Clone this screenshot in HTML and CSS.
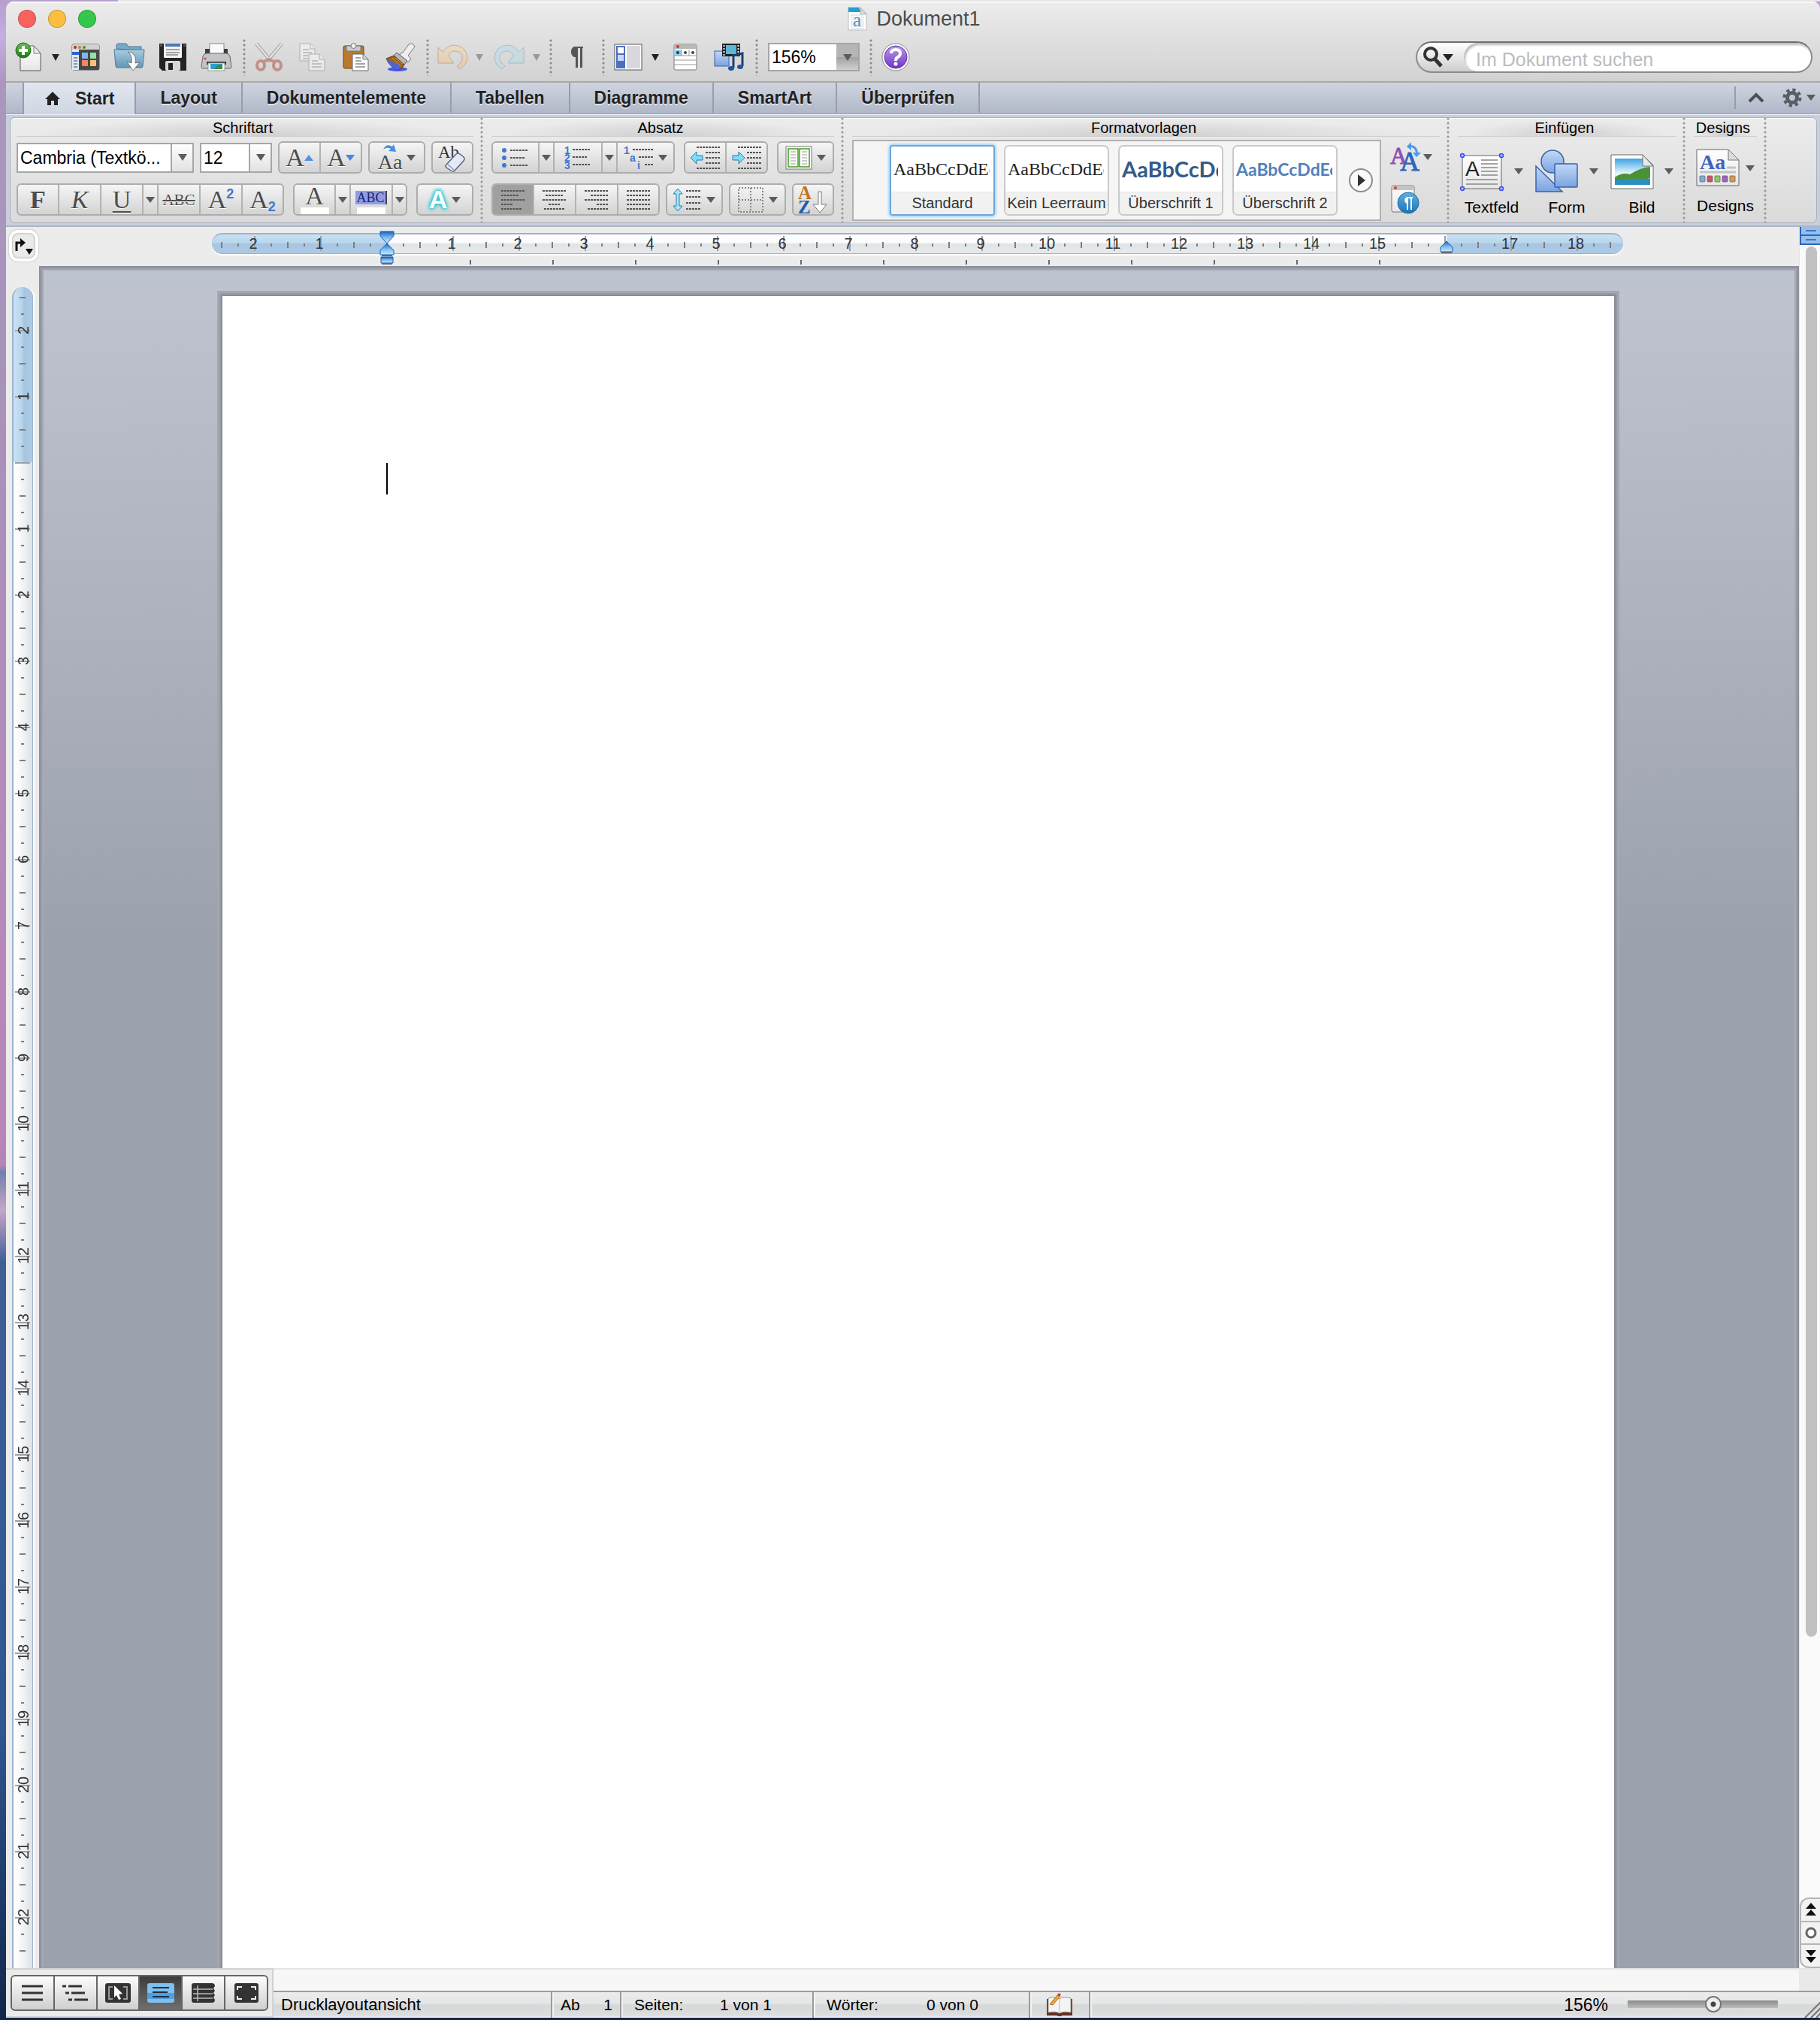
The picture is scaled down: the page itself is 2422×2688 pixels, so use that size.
FILE: index.html
```html
<!DOCTYPE html>
<html lang="de">
<head>
<meta charset="utf-8">
<title>Dokument1</title>
<link rel="stylesheet" href="styles.css">
</head>
<body>
<svg class="defs" width="0" height="0" aria-hidden="true">
  <defs>
    <linearGradient id="paper" x1="0" y1="0" x2="0" y2="1"><stop offset="0" stop-color="#fff"/><stop offset="1" stop-color="#e6e6e6"/></linearGradient>
    <linearGradient id="folder" x1="0" y1="0" x2="0" y2="1"><stop offset="0" stop-color="#a8cbe0"/><stop offset="1" stop-color="#6296b8"/></linearGradient>
    <linearGradient id="shape" x1="0" y1="0" x2="0" y2="1"><stop offset="0" stop-color="#c3d9f6"/><stop offset="1" stop-color="#7ba3e0"/></linearGradient>
    <linearGradient id="violet" x1="0" y1="0" x2="0" y2="1"><stop offset="0" stop-color="#b99be8"/><stop offset="1" stop-color="#7132cb"/></linearGradient>
    <linearGradient id="green" x1="0" y1="0" x2="0" y2="1"><stop offset="0" stop-color="#66c153"/><stop offset="1" stop-color="#1c7a14"/></linearGradient>
    <linearGradient id="sky" x1="0" y1="0" x2="0" y2="1"><stop offset="0" stop-color="#3fa4e4"/><stop offset=".55" stop-color="#e3f5fa"/><stop offset="1" stop-color="#9fdcf0"/></linearGradient>
    <linearGradient id="marker" x1="0" y1="0" x2="0" y2="1"><stop offset="0" stop-color="#1b62bb"/><stop offset=".5" stop-color="#7db9f5"/><stop offset="1" stop-color="#c4efff"/></linearGradient>
    <linearGradient id="blueball" x1="0" y1="0" x2="0" y2="1"><stop offset="0" stop-color="#5fb2e2"/><stop offset="1" stop-color="#1a73b5"/></linearGradient>
    <linearGradient id="orange" x1="0" y1="0" x2="0" y2="1"><stop offset="0" stop-color="#f9d9a6"/><stop offset="1" stop-color="#f0bd7b"/></linearGradient>
  </defs>
</svg>

<div class="window">
  <header class="chrome">
    <div class="titlebar">
      <div class="lights">
        <button class="light light-red" aria-label="Schließen"></button>
        <button class="light light-yellow" aria-label="Minimieren"></button>
        <button class="light light-green" aria-label="Vollbild"></button>
      </div>
      <h1 class="title">
        <svg width="24" height="30" viewBox="0 0 24 30"><path d="M0 0h16l8 9v21H0z" fill="#fff" stroke="#bbb"/><path d="M0 0h14l3 6H0z" fill="#22a0cf"/><path d="M16 0v9h8z" fill="#ddd" stroke="#999" stroke-width=".7"/><path d="M3 10h16M3 13h18M3 16h18M3 19h18M3 22h18M3 25h18M3 28h18" stroke="#c9d6de"/><text x="6" y="25" class="svg-serif" font-size="25" fill="#4b95c9">a</text></svg>
        Dokument1
      </h1>
    </div>

    <div class="toolbar">
      <button class="tool" aria-label="Neu"><svg width="36" height="40" viewBox="0 0 36 40"><path d="M7 5h18l9 10v23H7z" fill="url(#paper)" stroke="#555"/><path d="M25 5v10h9z" fill="#eee" stroke="#777"/><circle cx="11" cy="11" r="10" fill="url(#green)" stroke="#1b6a15"/><path d="M11 5v12M5 11h12" stroke="#fff" stroke-width="4"/></svg></button>
      <button class="drop" aria-label="Neu Optionen"><i class="tri tri-dark"></i></button>
      <button class="tool" aria-label="Katalog"><svg width="38" height="36" viewBox="0 0 38 36"><rect x="1" y="1" width="36" height="34" rx="2" fill="#474747" stroke="#555"/><path d="M1 8V3q0-2 2-2h32q2 0 2 2v5z" fill="#d2d2d2"/><circle cx="5" cy="5" r="2" fill="#b92b23"/><circle cx="11" cy="5" r="2" fill="#c8891a"/><circle cx="17" cy="5" r="2" fill="#3e9b35"/><rect x="1" y="8" width="9" height="27" fill="#e2e8f2"/><path d="M1 11h9v4H1z" fill="#2c63cf"/><path d="M3 19h5M3 23h5M3 27h5M3 31h5" stroke="#8594ab" stroke-width="2"/><rect x="14" y="12" width="8" height="8" fill="#7db6f6"/><rect x="25" y="12" width="8" height="8" fill="#92e3ac"/><rect x="14" y="22" width="8" height="8" fill="#f2875f"/><rect x="25" y="22" width="8" height="8" fill="#f7c178"/></svg></button>
      <button class="tool" aria-label="Öffnen"><svg width="40" height="38" viewBox="0 0 40 38"><path d="M3 8V3q0-2 2-2h11l3 4h17v5z" fill="#79a9c7" stroke="#4d7b99"/><path d="M0 9h40l-2 22q0 2-2 2H4q-2 0-2-2z" fill="url(#folder)" stroke="#4d7b99"/><path d="M18 12c10 1 11 8 10 15l6-1-9 11-8-12 6 2c1-6 0-11-5-15z" fill="#fff" stroke="#777"/></svg></button>
      <button class="tool" aria-label="Speichern"><svg width="36" height="36" viewBox="0 0 36 36"><path d="M0 0h36v36H4l-4-4z" fill="#232323"/><rect x="6" y="0" width="24" height="19" rx="1" fill="#f3f3f3"/><path d="M8 0h20v4H8z" fill="#5078b2"/><path d="M9 8h18M9 12h18M9 15h16" stroke="#888" stroke-width="1.5"/><rect x="8" y="23" width="20" height="13" rx="2" fill="#d5d7dd"/><rect x="12" y="26" width="6" height="9" fill="#222"/><path d="M1 1h3v3H1zM32 1h3v3h-3z" fill="#555"/></svg></button>
      <button class="tool" aria-label="Drucken"><svg width="40" height="38" viewBox="0 0 40 38"><rect x="11" y="1" width="19" height="14" fill="#fafafa" stroke="#888"/><path d="M5 8h6v6h19V8h5v9H5z" fill="#3c3c3c"/><path d="M2 18q1-4 5-4h26q4 0 5 4l2 14q0 2-2 2H2q-2 0-2-2z" fill="#c3c4c7" stroke="#666"/><path d="M7 25h26v4H7z" fill="#333"/><path d="M9 27h22v10H9z" fill="#fff" stroke="#999"/><path d="M12 28h16v7H12z" fill="#2f9fd0"/><path d="M17 35q3-7 11-6v6z" fill="#3b8a44"/><circle cx="5" cy="21" r="1.5" fill="#e33"/></svg></button>
      <i class="sep"></i>
      <button class="tool faded" aria-label="Ausschneiden"><svg width="38" height="38" viewBox="0 0 38 38"><path d="M2 1l20 24M36 1L16 25" stroke="#777" stroke-width="5"/><path d="M2 1l20 24M36 1L16 25" stroke="#f2f2f2" stroke-width="2"/><ellipse cx="8" cy="30" rx="5" ry="6" fill="none" stroke="#a83a2c" stroke-width="4"/><ellipse cx="30" cy="30" rx="5" ry="6" fill="none" stroke="#a83a2c" stroke-width="4"/><path d="M12 25l7-3 7 3" fill="none" stroke="#a83a2c" stroke-width="4"/></svg></button>
      <button class="tool faded" aria-label="Kopieren"><svg width="36" height="38" viewBox="0 0 36 38"><g fill="#fff" stroke="#777"><path d="M1 1h14l6 7v16H1z"/><path d="M15 1v7h6"/><path d="M13 15h14l7 7v15H13z"/><path d="M27 15v7h7"/></g><path d="M5 9h8M5 13h12M5 17h7M5 21h7M17 24h8M17 28h13M17 32h13" stroke="#888" stroke-width="1.5"/></svg></button>
      <button class="tool" aria-label="Einfügen"><svg width="36" height="38" viewBox="0 0 36 38"><rect x="1" y="4" width="27" height="30" rx="2" fill="#b97a2e" stroke="#6f4311"/><path d="M5 4h19v7H5z" fill="#cbcbcb" stroke="#777"/><circle cx="14.500" cy="4" r="3.500" fill="#eee" stroke="#777"/><path d="M13 15h14l7 7v15H13z" fill="#fff" stroke="#666"/><path d="M27 15v7h7z" fill="#ddd" stroke="#777"/><path d="M17 20h7M17 24h8M17 28h13M17 32h13" stroke="#888" stroke-width="1.500"/></svg></button>
      <button class="tool" aria-label="Format übertragen"><svg width="42" height="38" viewBox="0 0 42 38"><ellipse cx="18" cy="35" rx="13" ry="3" fill="#4a57df"/><path d="M25 13l8-11q5-3 8 3l-9 12 4 4-4 5-12-8 2-4z" fill="#eee" stroke="#777"/><path d="M17 13l14 11-4 5L13 17z" fill="#b9b9b9" stroke="#555"/><path d="M13 17l14 12q-2 5-8 7Q8 33 3 21z" fill="#9b6320" stroke="#5f3a0e"/><path d="M15 20l10 8M11 20l11 11" stroke="#d79a45"/><path d="M3 21q3 1 4 4l4-1 3 5 5-1 3 5q-2 3-4 3Q8 33 3 21z" fill="#4a63e6"/></svg></button>
      <i class="sep"></i>
      <button class="tool faded" aria-label="Rückgängig"><svg width="42" height="34" viewBox="0 0 42 34"><path d="M2 4l6 6Q15 1 24 1q15 1 17 16 0 10-10 16l-4-4q8-6 7-12-1-8-10-8-6 0-8 6l7 10H2z" fill="url(#orange)" stroke="#9a774a"/></svg></button>
      <button class="drop" aria-label="Rückgängig Optionen"><i class="tri tri-light"></i></button>
      <button class="tool faded" aria-label="Wiederholen"><svg width="42" height="34" viewBox="0 0 42 34"><path d="M40 4l-6 6Q27 1 18 1 3 2 1 17q0 10 10 16l4-4q-8-6-7-12 1-8 10-8 6 0 8 6l-7 10h21z" fill="#b5dbea" stroke="#6c97ac"/></svg></button>
      <button class="drop" aria-label="Wiederholen Optionen"><i class="tri tri-light"></i></button>
      <i class="sep"></i>
      <button class="tool" aria-label="Formatierungszeichen"><svg width="22" height="32" viewBox="0 0 22 32"><path d="M21 2H9a8 8 0 0 0 0 14h2v14h3V4h3v26h3V4h1z" fill="#555"/></svg></button>
      <i class="sep"></i>
      <button class="tool" aria-label="Seitenleiste"><svg width="38" height="36" viewBox="0 0 38 36"><rect x="1" y="1" width="36" height="34" fill="#fff" stroke="#555"/><rect x="3" y="3" width="12" height="30" fill="#4b70bd"/><rect x="5" y="5" width="8" height="8" fill="#fff"/><rect x="5" y="15" width="8" height="8" fill="#c9d7f2"/><rect x="17" y="3" width="18" height="30" fill="#d9d9dd"/></svg></button>
      <button class="drop" aria-label="Seitenleiste Optionen"><i class="tri tri-dark"></i></button>
      <button class="tool" aria-label="Toolbox"><svg width="32" height="36" viewBox="0 0 32 36"><rect x="1" y="1" width="30" height="34" rx="2" fill="#fff" stroke="#777"/><path d="M1 7V3q0-2 2-2h26q2 0 2 2v4z" fill="#b8b8b8"/><circle cx="6" cy="4" r="2" fill="#d0372c"/><rect x="1" y="8" width="10" height="8" fill="#8fd0f5"/><path d="M11 8v8M21 8v8M1 16h30M1 22h30M1 28h30" stroke="#999"/><circle cx="6" cy="12" r="2" fill="#333"/><circle cx="16" cy="12" r="2" fill="#444"/><circle cx="26" cy="12" r="2" fill="#444"/></svg></button>
      <button class="tool" aria-label="Medien"><svg width="40" height="38" viewBox="0 0 40 38"><rect x="1" y="11" width="19" height="20" fill="url(#shape)" stroke="#3762ad"/><rect x="11" y="1" width="24" height="17" fill="#222"/><rect x="16" y="3" width="14" height="12" fill="#5cb6d8"/><path d="M13.500 3v14M32.500 3v14" stroke="#eee" stroke-width="2" stroke-dasharray="2 2"/><path d="M26 33V17l12-3v17" fill="none" stroke="#1c4179" stroke-width="3"/><ellipse cx="23" cy="34" rx="4" ry="3" fill="#245496"/><ellipse cx="35" cy="32" rx="4" ry="3" fill="#245496"/></svg></button>
      <i class="sep"></i>
      <label class="combo combo-zoom"><select aria-label="Zoom"><option>156%</option></select><span class="combo-arrow"><i class="tri"></i></span></label>
      <i class="sep"></i>
      <button class="tool" aria-label="Hilfe"><svg width="40" height="40" viewBox="0 0 40 40"><circle cx="20" cy="20" r="18" fill="#fff" stroke="#888"/><circle cx="20" cy="20" r="15" fill="url(#violet)" stroke="#6330a8"/><path d="M14 15q0-5 6-5t6 5q0 3-3 5-3 1-3 5" fill="none" stroke="#fff" stroke-width="4"/><circle cx="20" cy="29" r="2.500" fill="#fff"/></svg></button>

      <div class="search">
        <button class="search-menu" aria-label="Suchoptionen"><svg width="26" height="28" viewBox="0 0 26 28"><circle cx="10" cy="10" r="8" fill="none" stroke="#333" stroke-width="4"/><path d="M15 16l9 10" stroke="#333" stroke-width="5"/></svg><i class="tri tri-dark"></i></button>
        <input type="search" aria-label="Suche" placeholder="Im Dokument suchen">
      </div>
    </div>
  </header>

  <nav class="tabs">
    <button class="tab tab-active"><svg width="20" height="18" viewBox="0 0 20 18"><path d="M10 0l10 10h-3v8h-5v-6H8v6H3v-8H0z" fill="#222"/></svg>Start</button>
    <button class="tab">Layout</button>
    <button class="tab">Dokumentelemente</button>
    <button class="tab">Tabellen</button>
    <button class="tab">Diagramme</button>
    <button class="tab">SmartArt</button>
    <button class="tab">Überprüfen</button>
    <div class="tab-tools">
      <button aria-label="Menüband ausblenden"><svg width="22" height="14" viewBox="0 0 22 14"><path d="M2 12l9-9 9 9" fill="none" stroke="#4c4f55" stroke-width="4"/></svg></button>
      <button class="gear" aria-label="Einstellungen"><svg width="26" height="26" viewBox="0 0 26 26"><circle cx="13" cy="13" r="6.500" fill="none" stroke="#5a5d63" stroke-width="5"/><circle cx="13" cy="13" r="10.500" fill="none" stroke="#5a5d63" stroke-width="4" stroke-dasharray="4.200 4.050"/></svg><i class="tri"></i></button>
    </div>
  </nav>

  <section class="ribbon">
    <div class="panel">
      <div class="group">
        <h2 class="group-label">Schriftart</h2>
        <div class="rows">
          <div class="row">
            <label class="combo combo-font"><select aria-label="Schriftart"><option>Cambria (Textkö...</option></select><span class="combo-arrow"><i class="tri"></i></span></label>
            <label class="combo combo-size"><select aria-label="Schriftgrad"><option>12</option></select><span class="combo-arrow"><i class="tri"></i></span></label>
            <div class="seg"><button class="btn" aria-label="Vergrößern"><span class="glyph">A</span><i class="tri-up"></i></button><button class="btn" aria-label="Verkleinern"><span class="glyph">A</span><i class="tri tri-blue"></i></button></div>
            <div class="seg"><button class="btn btn-wide" aria-label="Groß-/Kleinschreibung"><span class="case"><svg width="20" height="12" viewBox="0 0 20 12"><path d="M1 8q4-9 12-4l2-3 3 10-10-1 3-3Q6 4 1 8z" fill="#4a8fe0"/></svg><span class="glyph glyph-mid">Aa</span></span><i class="tri"></i></button></div>
            <div class="seg"><button class="btn" aria-label="Formatierung löschen"><svg width="38" height="38" viewBox="0 0 38 38"><text x="0" y="19" class="svg-serif" font-size="23" fill="#333">Ab</text><path d="M11 28l13-14q2-2 5 0l5 4q2 2 0 5L22 36q-2 2-5 0l-6-4q-2-2 0-4z" fill="#e3e9f6" stroke="#59647f" stroke-width="1.500"/><path d="M12 27l9 8" stroke="#8d99b8" stroke-width="1.500"/></svg></button></div>
          </div>
          <div class="row row-loose">
            <div class="seg"><button class="btn glyph glyph-bold">F</button><button class="btn glyph glyph-italic">K</button><button class="btn glyph"><u>U</u></button><button class="btn-drop" aria-label="Unterstreichung"><i class="tri"></i></button><button class="btn glyph glyph-small"><s>ABC</s></button><button class="btn" aria-label="Hochgestellt"><span class="glyph">A</span><b class="script script-up">2</b></button><button class="btn" aria-label="Tiefgestellt"><span class="glyph">A</span><b class="script script-down">2</b></button></div>
            <div class="seg"><button class="btn btn-color"><span class="glyph">A</span><i class="swatch"></i></button><button class="btn-drop" aria-label="Schriftfarbe"><i class="tri"></i></button><button class="btn btn-color"><span class="marked">ABC</span><i class="swatch"></i></button><button class="btn-drop" aria-label="Hervorhebung"><i class="tri"></i></button></div>
            <div class="seg"><button class="btn btn-wide"><span class="glow">A</span><i class="tri"></i></button></div>
          </div>
        </div>
      </div>

      <div class="group">
        <h2 class="group-label">Absatz</h2>
        <div class="rows">
          <div class="row row-loose">
            <div class="seg">
              <button class="btn btn-list" aria-label="Aufzählung"><svg width="38" height="28" viewBox="0 0 38 28"><g fill="#3f78cf"><circle cx="4" cy="4" r="3"/><circle cx="4" cy="14" r="3"/><circle cx="4" cy="24" r="3"/></g><path class="ln" d="M12 4h24M12 14h20M12 24h24"/></svg></button><button class="btn-drop" aria-label="Aufzählungszeichen"><i class="tri"></i></button>
              <button class="btn btn-list" aria-label="Nummerierung"><svg width="38" height="32" viewBox="0 0 38 32"><g class="num"><text x="1" y="11">1</text><text x="1" y="21">2</text><text x="1" y="31">3</text></g><path class="ln" d="M12 5h24M12 15h20M12 25h24"/></svg></button><button class="btn-drop" aria-label="Nummerierungsart"><i class="tri"></i></button>
              <button class="btn btn-wide" aria-label="Liste mit mehreren Ebenen"><svg width="40" height="32" viewBox="0 0 40 32"><g class="num"><text x="0" y="11">1</text><text x="8" y="21">a</text><text x="18" y="31">i</text></g><path class="ln" d="M12 5h28M20 15h20M28 25h12"/></svg><i class="tri"></i></button>
            </div>
            <div class="seg">
              <button class="btn" aria-label="Einzug verkleinern"><svg width="40" height="34" viewBox="0 0 40 34"><path class="ln" d="M8 3h32M20 10h20M20 17h20M20 24h20M8 31h32"/><path d="M0 17l8-8v5h8v6H8v5z" fill="#7fdcfb" stroke="#2a7cab"/></svg></button>
              <button class="btn" aria-label="Einzug vergrößern"><svg width="40" height="34" viewBox="0 0 40 34"><path class="ln" d="M8 3h32M20 10h20M20 17h20M20 24h20M8 31h32"/><path d="M17 17l-8-8v5H1v6h8v5z" fill="#7fdcfb" stroke="#2a7cab"/></svg></button>
            </div>
            <div class="seg"><button class="btn btn-wide" aria-label="Spalten"><svg width="36" height="32" viewBox="0 0 36 32"><rect x="1" y="1" width="34" height="30" fill="#fff" stroke="#777"/><path d="M4 4h13v24H4zM19 4h13v24H19z" fill="none" stroke="#3f9b1e" stroke-width="1.500"/><path d="M7 8h7M7 12h7M7 16h7M7 20h7M7 24h7M22 8h7M22 12h7M22 16h7M22 20h7M22 24h7" stroke="#bbb" stroke-width="1.500"/></svg><i class="tri"></i></button></div>
          </div>
          <div class="row">
            <div class="seg">
              <button class="btn btn-on" aria-label="Linksbündig"><svg width="32" height="28" viewBox="0 0 32 28"><path class="ln" d="M0 2h32M0 8h24M0 14h32M0 20h16M0 26h28"/></svg></button>
              <button class="btn" aria-label="Zentriert"><svg width="32" height="28" viewBox="0 0 32 28"><path class="ln" d="M0 2h32M4 8h24M0 14h32M8 20h16M2 26h28"/></svg></button>
              <button class="btn" aria-label="Rechtsbündig"><svg width="32" height="28" viewBox="0 0 32 28"><path class="ln" d="M0 2h32M8 8h24M0 14h32M16 20h16M4 26h28"/></svg></button>
              <button class="btn" aria-label="Blocksatz"><svg width="32" height="28" viewBox="0 0 32 28"><path class="ln" d="M0 2h32M0 8h32M0 14h32M0 20h32M0 26h32"/></svg></button>
            </div>
            <div class="seg"><button class="btn btn-wide" aria-label="Zeilenabstand"><svg width="38" height="32" viewBox="0 0 38 32"><path d="M6 1l6 7H8v16h4l-6 7-6-7h4V8H0z" fill="#a5e6fb" stroke="#2a7cab"/><path class="ln" d="M17 4h20M17 12h20M17 20h20M17 28h20"/></svg><i class="tri"></i></button></div>
            <div class="seg"><button class="btn btn-wide" aria-label="Rahmen"><svg width="36" height="36" viewBox="0 0 36 36"><path d="M2 2h32v32H2zM18 2v32M2 18h32" fill="none" stroke="#888" stroke-width="2" stroke-dasharray="2 2"/></svg><i class="tri"></i></button></div>
            <div class="seg"><button class="btn" aria-label="Sortieren"><svg width="42" height="38" viewBox="0 0 42 38"><text x="1" y="18" class="svg-serif" font-weight="bold" font-size="25" fill="#c0741b">A</text><text x="1" y="37" class="svg-serif" font-weight="bold" font-size="25" fill="#1f5cab">Z</text><path d="M28 8h4v17h7L30 36 21 25h7z" fill="#fff" stroke="#777"/></svg></button></div>
          </div>
        </div>
      </div>

      <div class="group">
        <h2 class="group-label">Formatvorlagen</h2>
        <div class="styles-row">
          <div class="gallery">
            <button class="style style-on"><span class="sample sample-serif">AaBbCcDdEe</span><span class="style-name">Standard</span></button>
            <button class="style"><span class="sample sample-serif">AaBbCcDdEe</span><span class="style-name">Kein Leerraum</span></button>
            <button class="style"><span class="sample sample-h1">AaBbCcDdEe</span><span class="style-name">Überschrift 1</span></button>
            <button class="style"><span class="sample sample-h2">AaBbCcDdEe</span><span class="style-name">Überschrift 2</span></button>
            <button class="more" aria-label="Weitere Formatvorlagen"><svg width="34" height="34" viewBox="0 0 34 34"><circle cx="17" cy="17" r="15" fill="#fafafa" stroke="#8b8b8b" stroke-width="2"/><path d="M13 9l10 8-10 8z" fill="#333"/></svg></button>
          </div>
          <div class="side">
            <button class="side-btn" aria-label="Formatvorlagen ändern"><svg width="40" height="40" viewBox="0 0 40 40"><text x="0" y="29" class="svg-serif" font-size="31" fill="#8f4fb5" stroke="#8f4fb5">A</text><text x="13" y="38" class="svg-serif" font-size="36" fill="#2f66bd" stroke="#2f66bd">A</text><path d="M22 6l6-6v4q8 1 9 10h4l-6 6-5-6h4q-1-6-6-7v4z" fill="#4a9af0"/></svg><i class="tri"></i></button>
            <button class="side-btn" aria-label="Formatvorlagenfenster"><svg width="40" height="40" viewBox="0 0 40 40"><rect x="2" y="2" width="30" height="35" rx="2" fill="url(#paper)" stroke="#777"/><path d="M2 8V4q0-2 2-2h26q2 0 2 2v4z" fill="#c4c4c4"/><circle cx="7" cy="5" r="2" fill="#e33"/><circle cx="24" cy="25" r="14" fill="url(#blueball)" stroke="#216a9e"/><path d="M30 17h-8a5 5 0 0 0 0 9v8h2V19h3v15h2V19h1z" fill="#fff"/></svg></button>
          </div>
        </div>
      </div>

      <div class="group">
        <h2 class="group-label">Einfügen</h2>
        <div class="bigs">
          <button class="big"><span class="big-icon"><svg width="58" height="60" viewBox="0 0 58 60"><rect x="3" y="9" width="52" height="44" fill="url(#paper)" stroke="#666"/><path d="M28 15h22M28 20h22M28 25h22M28 30h22M28 35h22M8 41h42M8 47h42" stroke="#888" stroke-width="1.500"/><text x="7" y="36" class="svg-sans" font-size="28" fill="#222">A</text><g fill="#a8b4ff" stroke="#3d50e8" stroke-width="1.500"><circle cx="3" cy="9" r="2.500"/><circle cx="55" cy="9" r="2.500"/><circle cx="3" cy="53" r="2.500"/><circle cx="55" cy="53" r="2.500"/></g></svg><i class="tri"></i></span>Textfeld</button>
          <button class="big"><span class="big-icon"><svg width="58" height="60" viewBox="0 0 58 60"><g fill="url(#shape)" stroke="#3a62ad" stroke-width="1.500"><circle cx="23" cy="17" r="15"/><path d="M1 23v34h35z"/><rect x="26" y="20" width="30" height="31" rx="1"/></g></svg><i class="tri"></i></span>Form</button>
          <button class="big"><span class="big-icon"><svg width="58" height="60" viewBox="0 0 58 60"><path d="M1 8h42l14 14v31H1z" fill="#fff" stroke="#666"/><path d="M6 13h38v10h9v25H6z" fill="url(#sky)"/><path d="M6 38q10-7 20-4 14-9 27-10v15q-15 4-26 3T6 43z" fill="#4b9136"/><path d="M6 42q20-3 47-2v8H6z" fill="#2b8fc0"/><path d="M43 8v15h14z" fill="#e8e8e8" stroke="#777"/></svg><i class="tri"></i></span>Bild</button>
        </div>
      </div>

      <div class="group">
        <h2 class="group-label">Designs</h2>
        <div class="bigs">
          <button class="big big-design"><span class="big-icon"><svg width="58" height="52" viewBox="0 0 58 52"><path d="M1 1h42l14 14v34H1z" fill="url(#paper)" stroke="#666"/><path d="M43 1v14h14z" fill="#ddd" stroke="#777"/><path d="M41 25h12M5 31h48" stroke="#c3c3c3" stroke-width="3"/><text x="5" y="27" class="svg-serif" font-weight="bold" font-size="28" fill="#3f62bd">Aa</text><g stroke="#666" stroke-width=".8"><rect x="5" y="36" width="7" height="8" rx="1" fill="#82a8d8"/><rect x="15" y="36" width="7" height="8" rx="1" fill="#cb5463"/><rect x="25" y="36" width="7" height="8" rx="1" fill="#92c964"/><rect x="35" y="36" width="7" height="8" rx="1" fill="#a05ec3"/><rect x="45" y="36" width="7" height="8" rx="1" fill="#e0954d"/></g></svg><i class="tri"></i></span>Designs</button>
        </div>
      </div>
    </div>
  </section>

  <section class="work">
    <button class="tab-stop" aria-label="Tabstopp"><svg width="26" height="30" viewBox="0 0 26 30"><path d="M3 22V11h7" fill="none" stroke="#111" stroke-width="3"/><path d="M8 5l7 6-7 6zM15 19h10l-5 8z" fill="#111"/></svg></button>

    <div class="hruler-area">
      <div class="hruler">
        <div class="hcells"><span>2</span><span>1</span><span></span><span>1</span><span>2</span><span>3</span><span>4</span><span>5</span><span>6</span><span>7</span><span>8</span><span>9</span><span>10</span><span>11</span><span>12</span><span>13</span><span>14</span><span>15</span><span></span><span>17</span><span>18</span><span class="end"></span></div>
        <svg class="indent indent-left" width="18" height="44" viewBox="0 0 18 44"><path d="M0 0h18v6l-9 10L0 6z" fill="url(#marker)" stroke="#1b5eb0"/><path d="M9 16l9 9v6H0v-6z" fill="url(#marker)" stroke="#1b5eb0"/><path d="M1 34h16v8H1z" fill="url(#marker)" stroke="#1b5eb0"/><path d="M2 32h14M2 43h14" stroke="#666" stroke-width="2"/></svg>
        <svg class="indent indent-right" width="18" height="17" viewBox="0 0 18 17"><path d="M9 1l8 8v6H1V9z" fill="url(#marker)" stroke="#1b5eb0"/><path d="M2 16h14" stroke="#666" stroke-width="2"/></svg>
      </div>
      <div class="stops"></div>
    </div>

    <div class="vruler-area">
      <div class="vruler"><span>2</span><span>1</span><span></span><span>1</span><span>2</span><span>3</span><span>4</span><span>5</span><span>6</span><span>7</span><span>8</span><span>9</span><span>10</span><span>11</span><span>12</span><span>13</span><span>14</span><span>15</span><span>16</span><span>17</span><span>18</span><span>19</span><span>20</span><span>21</span><span>22</span><span class="end"></span></div>
    </div>

    <main class="desk">
      <article class="page" aria-label="Dokument"><span class="caret"></span></article>
    </main>

    <aside class="scroll">
      <div class="split"><i></i><i></i></div>
      <div class="track"><div class="thumb"></div></div>
      <div class="browse">
        <button aria-label="Vorherige Seite"><svg width="16" height="18" viewBox="0 0 16 18"><path d="M8 0l7 8H1zM8 9l7 8H1z" fill="#111"/></svg></button>
        <button aria-label="Objekt wählen"><svg width="18" height="18" viewBox="0 0 18 18"><circle cx="9" cy="9" r="6" fill="#fff" stroke="#666" stroke-width="3"/></svg></button>
        <button aria-label="Nächste Seite"><svg width="16" height="18" viewBox="0 0 16 18"><path d="M1 1h14L8 9zM1 10h14l-7 8z" fill="#111"/></svg></button>
      </div>
    </aside>
  </section>

  <footer class="foot">
    <div class="views">
      <div class="view-seg">
        <button aria-label="Entwurf"><svg width="28" height="22" viewBox="0 0 28 22"><path d="M0 2h28M0 11h28M0 20h28" stroke="#333" stroke-width="3"/></svg></button>
        <button aria-label="Gliederung"><svg width="34" height="22" viewBox="0 0 34 22"><path d="M0 2h5M8 2h18M4 11h5M12 11h18M8 20h5M16 20h18" stroke="#333" stroke-width="3"/></svg></button>
        <button aria-label="Publishinglayout"><svg width="34" height="26" viewBox="0 0 34 26"><rect width="34" height="26" rx="3" fill="#333"/><path d="M10 5H5v16h5M24 5h5v16h-5" fill="none" stroke="#999" stroke-width="2"/><path d="M12 3l11 11-5 1 3 6-3 1-3-6-3 3z" fill="#fff"/></svg></button>
        <button class="view-on" aria-label="Drucklayout"><svg width="36" height="26" viewBox="0 0 36 26"><rect width="36" height="26" rx="3" fill="#7fc0ee"/><rect y="13" width="36" height="8" fill="#4f9fe0"/><path d="M7 6h22M7 12h20M7 18h22" stroke="#1d2f42" stroke-width="2"/></svg></button>
        <button aria-label="Notizbuch"><svg width="32" height="26" viewBox="0 0 32 26"><path d="M3 0h24q4 0 4 4l-2 3 2 3-2 3 2 3-2 3 2 3q0 4-4 4H3q-3 0-3-3V3q0-3 3-3z" fill="#333"/><path d="M2 8h26M2 14h26M2 20h26M8 3v21" stroke="#bbb" stroke-width="1.500"/></svg></button>
        <button aria-label="Vollbildmodus"><svg width="32" height="26" viewBox="0 0 32 26"><rect width="32" height="26" rx="3" fill="#333"/><path d="M4 9V5h6M22 5h6v4M28 17v4h-6M10 21H4v-4" fill="none" stroke="#eee" stroke-width="2"/></svg></button>
      </div>
    </div>
    <div class="hscroll"></div>
    <div class="status">
      <span class="cell cell-view">Drucklayoutansicht</span>
      <span class="cell cell-section"><span>Ab</span><span>1</span></span>
      <span class="cell cell-pages"><span>Seiten:</span><span>1 von 1</span></span>
      <span class="cell cell-words"><span>Wörter:</span><span>0 von 0</span></span>
      <span class="cell cell-spell"><svg width="36" height="32" viewBox="0 0 36 32"><path d="M1 8v22h13q4 2 8 0h13V8" fill="#6b2d1c"/><path d="M3 7q10-3 15 1 5-4 15-1v19q-10-2-15 1-5-3-15-1z" fill="#f4f4f4" stroke="#999"/><path d="M18 8v19" stroke="#bbb"/><path d="M5 15L16 2l3 2L9 16z" fill="#f2a636" stroke="#b36a1a"/><path d="M15 3l2-3 3 2-2 3z" fill="#d2374b"/></svg></span>
      <label class="zoom"><span>156%</span><input type="range" min="0" max="100" value="58" aria-label="Zoom"></label>
      <svg class="grip" width="22" height="22" viewBox="0 0 22 22"><path d="M0 22L22 0M8 22L22 8M15 22l7-7" stroke="#777" stroke-width="2"/></svg>
    </div>
  </footer>
</div>
</body>
</html>
```

FILE: styles.css
```css
* { box-sizing: border-box; }

:root {
  --cm: 88px;
  --edge: #a6a6a6;
}

body {
  margin: 0;
  min-height: 100vh;
  display: flex;
  padding: 2px 0 4px 8px;
  font-family: "Liberation Sans", Arial, sans-serif;
  font-size: 21px;
  color: #000;
  background:
    linear-gradient(#e6e6e6, #e6e6e6) 157px 0 / 100% 2px no-repeat,
    linear-gradient(#b79fce 0, #c5aee0 50px, #ab97be 110px, #a892bc 500px, #b887b8 1400px, #b884b4 1550px, #6f81ae 1560px, #c6a6c6 1610px, #3f5f96 1680px, #2f5690 2300px, #12264a 100%);
}

button, select, input { font: inherit; color: inherit; }
button { border: 0; margin: 0; padding: 0; background: none; display: flex; align-items: center; justify-content: center; }
h1, h2 { margin: 0; font-weight: normal; }
svg { display: block; flex: none; overflow: visible; }
.defs { position: absolute; }
.svg-serif { font-family: "Liberation Serif", serif; }
.svg-sans { font-family: "Liberation Sans", sans-serif; }

.window { flex: 1; min-width: 0; display: flex; flex-direction: column; background: #ececec; border-radius: 10px 10px 0 0; overflow: hidden; }

/* Triangles */
.tri, .tri-up { flex: none; border: 6px solid transparent; }
.tri { border-top: 8px solid #5c5c5c; border-bottom: 0; }
.tri-up { border-bottom: 8px solid #5090e6; border-top: 0; }
.tri-blue { border-top-color: #4586e0; }
.tri-dark { border-top-color: #222; }
.tri-light { border-top-color: #999; }

/* Title bar and toolbar */
.chrome { background: linear-gradient(#ececec, #d2d2d2); border-bottom: 2px solid #a9a9a9; box-shadow: inset 0 2px 0 #f8f8f8; }
.titlebar { height: 46px; display: flex; align-items: center; position: relative; padding-left: 16px; }
.lights { display: flex; gap: 16px; }
.light { width: 24px; height: 24px; border-radius: 50%; border: 1px solid #0003; }
.light-red { background: #fc625d; }
.light-yellow { background: #fdbd41; }
.light-green { background: #34c84a; }
.title { position: absolute; inset: 0; display: flex; align-items: center; justify-content: center; gap: 13px; padding-left: 4px; font-size: 27px; color: #4c4c4c; }
.toolbar { height: 60px; display: flex; align-items: center; padding: 0 10px 4px 1px; }
.tool { width: 58px; height: 44px; }
.faded { opacity: .45; }
.drop { width: 18px; height: 44px; padding-right: 4px; }
.drop .tri { border-width: 9px 5px 0; }
.sep { width: 12px; height: 50px; flex: none; background: radial-gradient(circle, #8b8b8b 1px, transparent 2px) 6px 0 / 4px 6px repeat-y; }

.combo { display: flex; align-items: stretch; height: 40px; border: 2px solid var(--edge); background: #fff; font-size: 23px; }
.combo select { flex: 1; min-width: 0; appearance: none; border: 0; border-radius: 0; background: #fff; padding: 0 0 0 3px; }
.combo-arrow { width: 29px; display: flex; align-items: center; justify-content: center; border-left: 2px solid var(--edge); background: linear-gradient(#fff, #e2e2e2); }
.combo-arrow .tri { border-width: 9px 6px 0; }
.combo-font { width: 236px; }
.combo-size { width: 96px; }
.combo-zoom { width: 122px; height: 38px; margin: 0 7px 0 11px; }
.combo-zoom .combo-arrow { border-left: 0; background: linear-gradient(#b5b5b5 50%, #a2a2a2 50%, #cfcfcf); }

.search { margin-left: auto; width: 528px; height: 42px; display: flex; border: 2px solid #8b8b8b; border-top-color: #6e6e6e; border-radius: 21px; background: linear-gradient(#fff, #cecece); overflow: hidden; }
.search-menu { width: 62px; padding-right: 6px; }
.search-menu .tri { border-width: 9px 7px 0; }
.search input { flex: 1; min-width: 0; appearance: none; border: 0; border-radius: 20px; background: #fff; box-shadow: inset 2px 3px 3px #0004; padding: 6px 16px 0; font-size: 25px; }
.search input::placeholder { color: #bcbcbc; }

/* Tabs */
.tabs { height: 42px; display: flex; padding-left: 22px; background: linear-gradient(#cfd4df, #b0b8c9); border-bottom: 2px solid #a3adc4; }
.tab { padding: 0 32px; font-size: 23px; font-weight: bold; color: #222; border-right: 2px solid #979dac; text-shadow: 0 2px 0 #dde1ea; }
.tab-active { gap: 20px; padding: 0 27px 0 28px; margin-bottom: -2px; background: linear-gradient(#e1e6ef, #cfd6e3); border-left: 2px solid #979dac; }
.tab-tools { margin: 5px 6px 5px auto; display: flex; gap: 24px; padding-left: 16px; border-left: 2px solid #979dac; }
.gear { gap: 6px; }

/* Ribbon */
.ribbon { padding: 3px 4px 3px 5px; background: #c8cfdc; border-top: 1px solid #eef1f7; border-bottom: 2px solid #aeb5c3; }
.panel { display: flex; height: 141px; border: 1px solid #a9b0be; border-radius: 7px; background: linear-gradient(#ececec, #dadada); box-shadow: inset 0 1px 0 #fff; }
.group { display: flex; flex-direction: column; padding: 0 13px 0 11px; background: radial-gradient(circle, #999 1px, transparent 2px) right 10px / 4px 6px repeat-y; }
.group:first-child { padding-left: 8px; }
.group-label { height: 25px; padding: 1px 6px 0 0; margin-bottom: 6px; font-size: 20px; line-height: 24px; text-align: center; background: radial-gradient(ellipse at 50% 100%, #cfcfcf, transparent 65%); border-bottom: 1px solid #cfcfcf; }
.rows { display: flex; flex-direction: column; gap: 13px; }
.row { display: flex; align-items: center; gap: 8px; height: 43px; }
.row-loose { gap: 12px; }
.seg { display: flex; height: 43px; border: 2px solid #adadad; border-radius: 6px; background: linear-gradient(#f5f5f5, #d3d3d3); overflow: hidden; }
.seg > * { flex: none; border-right: 2px solid #b2b2b2; }
.seg > :last-child { border-right: 0; }
.btn { width: 56px; }
.btn-drop { width: 20px; }
.btn-list { width: 64px; }
.btn-wide { width: 76px; gap: 6px; }
.seg > :first-child { width: 55px; }
.seg > .btn-list:first-child { width: 62px; }
.seg > :last-child { width: 53px; }
.seg > .btn-wide:last-child { width: 74px; }
.seg > .btn-drop:last-child { width: 17px; }
.seg > .btn:only-child { width: 52px; }
.seg > .btn-wide:only-child { width: 72px; }
.btn-on { background: #a0a0a0; }
.ln { stroke: #555; stroke-width: 2; stroke-dasharray: 3 1; fill: none; }
.num { font: bold 14px "Liberation Sans", sans-serif; fill: #3f78cf; }

.glyph { font-family: "Liberation Serif", serif; font-size: 34px; line-height: 38px; color: #4c4c4c; text-shadow: 0 1px 0 #fff; }
.glyph-bold { font-weight: bold; }
.glyph-italic { font-style: italic; }
.glyph-mid { font-size: 28px; line-height: 26px; }
.glyph-small { font-size: 21px; }
.glyph u { text-decoration-thickness: 2px; text-underline-offset: 4px; }
.case { display: flex; flex-direction: column; align-items: center; }
.script { font-size: 18px; line-height: 20px; color: #3f78cf; }
.script-up { align-self: flex-start; padding-top: 2px; }
.script-down { align-self: flex-end; }
.btn-color { flex-direction: column; justify-content: flex-start; }
.btn-color .glyph { line-height: 30px; }
.btn-color .swatch { margin-top: auto; }
.swatch { width: 38px; height: 9px; background: #fff; }
.marked { margin-top: 8px; padding: 0 1px; font: 18px/18px "Liberation Serif", serif; color: #1d2760; background: #8f9bea; border-right: 2px solid #444; }
.glow { font-size: 34px; font-weight: bold; color: #fff; text-shadow: 0 0 3px #35cbd6, 0 0 5px #35cbd6, 0 0 5px #35cbd6, 0 0 6px #35cbd6; }

.styles-row { display: flex; gap: 12px; margin-top: -2px; }
.gallery { display: flex; align-items: center; gap: 12px; height: 108px; padding: 0 6px 0 48px; border: 2px solid #b1b1b1; background: #f5f5f5; }
.style { width: 140px; height: 94px; flex-direction: column; align-items: stretch; border: 2px solid #cacaca; border-radius: 7px; background: #fff; overflow: hidden; }
.style-on { border-color: #6ba7dc; border-radius: 4px; box-shadow: 0 0 3px 2px #a9d8f7; }
.sample { flex: 1; margin: 0 5px 0 3px; overflow: hidden; white-space: nowrap; text-align: left; line-height: 60px; }
.sample-serif { font-family: "Liberation Serif", serif; font-size: 24px; color: #222; }
.sample-h1 { font-family: Lato, sans-serif; font-weight: bold; font-size: 29px; color: #345a8a; }
.sample-h2 { font-family: Lato, sans-serif; font-weight: bold; font-size: 23px; color: #4f81bd; }
.style-name { height: 30px; font-size: 20px; line-height: 28px; color: #333; background: #f1f1f1; border-top: 1px solid #e6e6e6; }
.more { margin-left: 2px; margin-right: 2px; width: 34px; }
.side { display: flex; flex-direction: column; gap: 16px; margin-top: 3px; width: 66px; }
.side-btn { gap: 4px; justify-content: flex-start; height: 40px; }

.bigs { display: flex; gap: 16px; margin-top: 10px; padding: 0 3px; }
.big { flex-direction: column; justify-content: flex-start; gap: 6px; line-height: 24px; }
.big-icon { display: flex; align-items: center; gap: 14px; }
.big-design { gap: 12px; }
.big-design .big-icon { gap: 8px; }

/* Rulers, document and scroll bar */
.work { flex: 1; display: grid; grid-template-columns: 44px 1fr 28px; grid-template-rows: 52px 1fr; }
.tab-stop { margin: 4px 1px 6px 4px; border: 4px solid #fff; border-radius: 12px; background: #eaeaea; box-shadow: 0 0 2px #999, inset 0 0 3px #999; }
.hruler-area { display: flex; flex-direction: column; align-items: center; min-width: 0; padding: 8px 4px 0 0; }
.hruler { position: relative; width: 1878px; height: 28px; flex: none; padding-left: 12px; border-radius: 14px; border: 2px solid #9ab4cb; border-width: 2px 0 1px; box-shadow: 0 2px 0 #fff;
  background: linear-gradient(#fff, #fafafa 45%, #dfe4e7 50%, #e6eaec) 233px 0 / 1410px 100% no-repeat, linear-gradient(#c9e2f5, #b8d5ec 45%, #a5c5e2 50%, #aecbe5); }
.hcells { display: flex; height: 100%; font-size: 20px; line-height: 25px; color: #333; text-align: center; }
.hcells span { width: var(--cm); flex: none; padding-right: 2px;
  background:
    linear-gradient(#817d78, #817d78) 0 10px / 2px 8px no-repeat,
    linear-gradient(#817d78, #817d78) 22px 12px / 2px 4px no-repeat,
    linear-gradient(#817d78, #817d78) 66px 12px / 2px 4px no-repeat,
    linear-gradient(#9aa3aa, #9aa3aa) 44px 2px / 2px 20px no-repeat; }
.hcells .end { width: 4px; }
.indent { position: absolute; z-index: 1; }
.indent-left { left: 224px; top: -4px; }
.indent-right { left: 1634px; top: 8px; }
.stops { width: 1212px; height: 6px; margin: 8px 0 0 20px; background: linear-gradient(90deg, #667 2px, transparent 2px) 0 0 / 110px 6px repeat-x; }
.vruler-area { grid-row: 2; grid-column: 1; padding: 28px 8px 0; }
.vruler { height: 100%; padding-top: 13px; border-radius: 14px 14px 0 0; border: 2px solid #9ab4cb; border-width: 0 1px 0 2px; box-shadow: 2px 0 0 #fff; display: flex; flex-direction: column; overflow: hidden;
  background: linear-gradient(90deg, #c9e2f5, #b8d5ec 45%, #a5c5e2 55%, #aecbe5) 0 0 / 100% 233px no-repeat, linear-gradient(90deg, #fff, #fafafa 30%, #dde2e5); }
.vruler span { height: var(--cm); flex: none; writing-mode: vertical-rl; transform: rotate(180deg); text-align: center; font-size: 20px; line-height: 26px; color: #333;
  background:
    linear-gradient(#817d78, #817d78) 9px 86px / 8px 2px no-repeat,
    linear-gradient(#817d78, #817d78) 11px 20px / 4px 2px no-repeat,
    linear-gradient(#817d78, #817d78) 11px 64px / 4px 2px no-repeat,
    linear-gradient(#9aa3aa, #9aa3aa) 3px 42px / 20px 2px no-repeat; }
.vruler .end { height: 24px; background: linear-gradient(#817d78, #817d78) 9px 22px / 8px 2px no-repeat; }

.desk { grid-row: 2; grid-column: 2; min-width: 0; display: flex; justify-content: center; padding: 40px 2px 0 0; overflow: hidden; background: linear-gradient(#bdc4cf, #bec2ce 60px, #9ba1ad 900px);
  box-shadow: inset 2px 2px 0 #8c909b, inset -2px 0 0 #8c909b, inset 4px 4px 0 #999da8, inset -4px 0 0 #999da8, inset 6px 6px 0 #a5a9b4, inset -6px 0 0 #a5a9b4; }
.page { flex: 0 1 1852px; padding: 222px 218px 0; background: #fff; box-shadow: 0 0 0 2px #898d98, 0 0 0 4px #959aa5, 0 0 0 7px #a2a7b2; }
.caret { display: block; width: 2px; height: 42px; background: #000; }

.scroll { grid-row: 1 / 3; grid-column: 3; display: flex; flex-direction: column; background: #fafafa; border-left: 1px solid #e4e4e4; }
.split { height: 24px; display: flex; flex-direction: column; }
.split i { flex: 1; border: 2px solid #2a68b6; border-width: 0 0 2px 2px; background: linear-gradient(#3f78bd, #3f78bd) center / 14px 2px no-repeat, #93bfef; }
.track { flex: 1; padding: 2px 4px 0 8px; }
.thumb { height: 84.2%; border-radius: 8px; background: #c1c1c1; }
.browse { height: 94px; display: flex; flex-direction: column; border: 2px solid #b5b5b5; border-right: 0; border-radius: 12px 0 0 12px; background: #f2f2f2; }
.browse button { flex: 1; border-bottom: 2px solid #b5b5b5; }
.browse button:last-child { border-bottom: 0; }

/* Footer */
.foot { display: grid; grid-template-columns: 356px 1fr; grid-template-rows: 30px 36px; }
.views { grid-row: 1 / 3; padding: 7px 5px 7px 6px; background: #ebebeb; border: 2px solid #d2d2d2; border-left: 0; }
.view-seg { display: flex; height: 48px; border: 2px solid #666; border-radius: 6px; background: linear-gradient(#fcfcfc, #cfcfcf); overflow: hidden; }
.view-seg button { flex: 1; border-right: 2px solid #666; }
.view-seg button:last-child { border-right: 0; }
.view-seg .view-on { background: linear-gradient(#3c3c3c, #6f6f6f); }
.hscroll { background: #f7f7f7; border-top: 2px solid #e4e4e4; border-right: 28px solid #e9e9e9; }
.status { display: flex; align-items: center; border-top: 2px solid #9c9c9c; background: linear-gradient(#ececec, #e4e5e6 45%, #d6d7d8 50%, #dcdddd 90%, #f3f3f3); }
.cell { height: 100%; display: flex; align-items: center; justify-content: space-between; border-right: 2px solid #9c9c9c; box-shadow: 2px 0 0 #f3f3f3; }
.cell-view { width: 371px; padding-left: 10px; font-size: 22px; }
.cell-section { width: 92px; padding-left: 11px; padding-right: 10px; }
.cell-pages { width: 256px; padding-left: 17px; padding-right: 54px; }
.cell-words { width: 288px; padding-left: 17px; padding-right: 67px; }
.cell-spell { width: 80px; justify-content: center; }
.zoom { margin-left: auto; display: flex; align-items: center; gap: 26px; font-size: 23px; }
.zoom input { width: 200px; height: 22px; margin: 0 36px 3px 0; appearance: none; background: linear-gradient(#8a8a8a, #bdbdbd) center / 100% 10px no-repeat; border-radius: 8px; }
.zoom input::-webkit-slider-thumb { appearance: none; width: 22px; height: 22px; border-radius: 50%; border: 2px solid #777; background: radial-gradient(circle, #444 3px, #eee 4px); }
.grip { margin-right: -2px; align-self: flex-end; }
```
